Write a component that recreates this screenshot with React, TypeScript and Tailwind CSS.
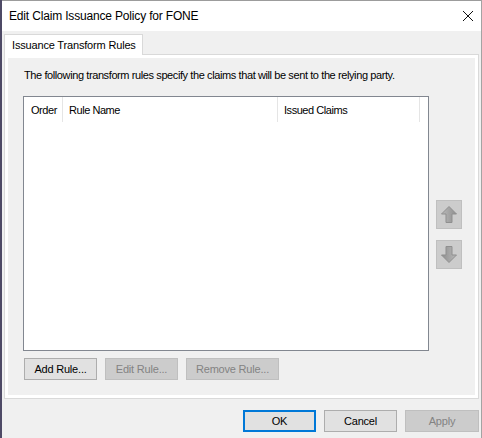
import React from "react";

const ui = { fontFamily: '"Liberation Sans", Arial, sans-serif' };

const Btn = ({
  label,
  disabled,
  focused,
  width = "w-[73px]",
}: {
  label: string;
  disabled?: boolean;
  focused?: boolean;
  width?: string;
}) => (
  <div
    className={`${width} h-[22px] flex items-center justify-center text-[11px] tracking-[-0.2px] ${
      disabled
        ? "bg-[#cccccc] border border-[#bfbfbf] text-[#838383]"
        : focused
        ? "bg-[#e1e1e1] border-2 border-[#0078d7] text-black"
        : "bg-[#e1e1e1] border border-[#adadad] text-black"
    }`}
  >
    {label}
  </div>
);

const ArrowBtn = ({ down }: { down?: boolean }) => (
  <div className="w-[26px] h-[29px] bg-[#cccccc] border border-[#bfbfbf] flex items-center justify-center">
    <svg
      width="16"
      height="17"
      viewBox="0 0 16 17"
      className={down ? "rotate-180" : ""}
    >
      <defs>
        <linearGradient id={down ? "gd" : "gu"} x1="0" x2="1" y1="0" y2="0">
          <stop offset="0" stopColor="#b9b9b9" />
          <stop offset="0.5" stopColor="#a4a4a4" />
          <stop offset="1" stopColor="#8e8e8e" />
        </linearGradient>
      </defs>
      <path
        d="M8 0.5 L15.5 8 L11 8 L11 16.5 L5 16.5 L5 8 L0.5 8 Z"
        fill={`url(#${down ? "gd" : "gu"})`}
        stroke="#8f8f8f"
        strokeWidth="1"
        strokeLinejoin="round"
      />
    </svg>
  </div>
);

export default function App() {
  return (
    <div
      className="w-[482px] h-[438px] bg-[#f0f0f0] flex flex-col border-l-2 border-l-[#4e4a66] border-r border-r-[#a3a3a3] overflow-hidden"
      style={ui}
    >
      {/* Title bar */}
      <div className="h-[31px] bg-white border-t border-[#9c9c9c] flex items-center justify-between pl-[7px] pr-[4px] shrink-0">
        <span className="text-[12px] text-black tracking-[-0.17px]">
          Edit Claim Issuance Policy for FONE
        </span>
        <svg width="12" height="12" viewBox="0 0 12 12" className="mr-[3px]">
          <path d="M1 1 L11 11 M11 1 L1 11" stroke="#111" strokeWidth="1" />
        </svg>
      </div>

      {/* Tab control */}
      <div className="mx-[2px] mt-[3px] flex flex-col">
        <div className="relative z-10 -mb-px w-[139px] h-[21px] bg-white border border-b-0 border-[#d9d9d9] flex items-center pl-[7px] text-[11px] text-black tracking-[-0.17px]">
          Issuance Transform Rules
        </div>
        <div className="h-[345px] border border-[#d9d9d9] bg-white p-[3px]">
          <div className="h-full bg-[#f0f0f0] flex flex-col pl-[15px] pt-[11px]">
            <p className="text-[11px] leading-[13px] text-black pl-[1px] tracking-[-0.4px]">
              The following transform rules specify the claims that will be
              sent to the relying party.
            </p>
            <div className="flex mt-[14px]">
              {/* List */}
              <div className="w-[406px] h-[255px] bg-white border border-[#828790]">
                <div className="flex h-[25px] text-[11px] text-black tracking-[-0.45px]">
                  <div className="w-[39px] border-r border-[#e5e5e5] flex items-center pl-[7px] pt-[2px]">
                    Order
                  </div>
                  <div className="w-[215px] border-r border-[#e5e5e5] flex items-center pl-[6px] pt-[2px]">
                    Rule Name
                  </div>
                  <div className="w-[142px] border-r border-[#e5e5e5] flex items-center pl-[6px] pt-[2px]">
                    Issued Claims
                  </div>
                </div>
              </div>
              <div className="flex flex-col ml-[7px] mt-[104px] gap-[11px]">
                <ArrowBtn />
                <ArrowBtn down />
              </div>
            </div>
            <div className="flex gap-[8px] mt-[7px] pl-[1px]">
              <Btn label="Add Rule..." />
              <Btn label="Edit Rule..." disabled />
              <Btn label="Remove Rule..." disabled width="w-[93px]" />
            </div>
          </div>
        </div>
      </div>

      {/* Footer */}
      <div className="flex justify-end gap-[8px] mt-[11px] pr-[2px]">
        <Btn label="OK" focused />
        <Btn label="Cancel" />
        <Btn label="Apply" disabled width="w-[74px]" />
      </div>
    </div>
  );
}
